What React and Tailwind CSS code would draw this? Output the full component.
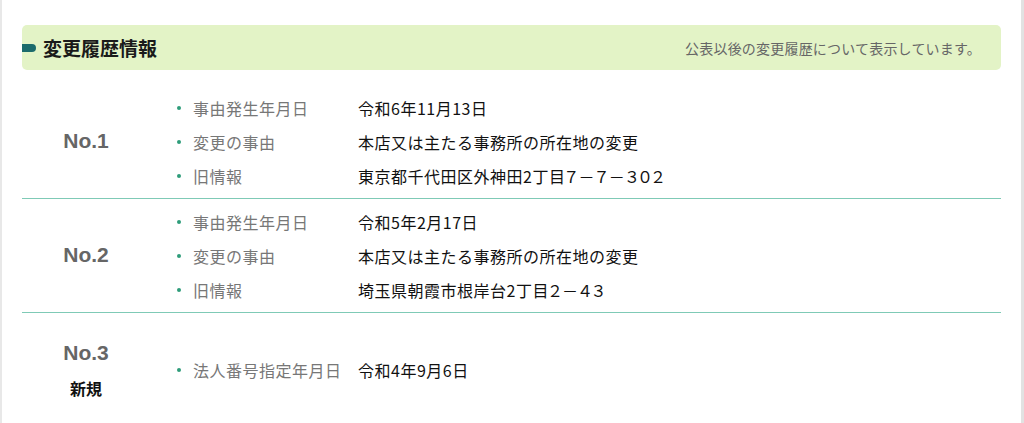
import React from "react";

const rows = [
  {
    no: "No.1",
    items: [
      ["事由発生年月日", "令和6年11月13日"],
      ["変更の事由", "本店又は主たる事務所の所在地の変更"],
      ["旧情報", "東京都千代田区外神田2丁目", "７－７－３０２"],
    ],
  },
  {
    no: "No.2",
    items: [
      ["事由発生年月日", "令和5年2月17日"],
      ["変更の事由", "本店又は主たる事務所の所在地の変更"],
      ["旧情報", "埼玉県朝霞市根岸台2丁目", "２－４３"],
    ],
  },
  {
    no: "No.3",
    sub: "新規",
    items: [["法人番号指定年月日", "令和4年9月6日"]],
  },
];

export default function App() {
  return (
    <div
      className="h-[423px] overflow-hidden bg-white border-l-2 border-r-[3px] border-l-[#e8e8e8] border-r-[#e2e2e2] pl-[20px] pr-[20px] pt-[25px]"
      style={{ fontFamily: '"Noto Sans CJK JP", "Noto Sans", sans-serif' }}
    >
      {/* 見出しバー */}
      <div className="h-[45px] rounded-[5px] bg-[#e3f3c6] flex items-center justify-between pr-[20px]">
        <div className="flex items-center">
          <span className="w-[14px] h-[8px] rounded-r-full bg-[#1c6b6c]" />
          <h2 className="ml-[7px] text-[19px] font-bold text-[#1a1a1a] leading-none">変更履歴情報</h2>
        </div>
        <p className="text-[14px] text-[#666] leading-none tracking-[0.2px]">公表以後の変更履歴について表示しています。</p>
      </div>

      <div className="mt-[15px]">
        {rows.map((r, i) => (
          <div
            key={r.no}
            className={`flex h-[114px] ${i < rows.length - 1 ? "border-b border-[#7fcab6]" : ""}`}
          >
            <div className="w-[128px] flex flex-col items-center justify-center gap-[17px] pb-[2px]">
              <span
                className="text-[21px] font-bold text-[#666] leading-none"
                style={{ fontFamily: '"Liberation Sans", Arial, sans-serif' }}
              >
                {r.no}
              </span>
              {r.sub && <span className="text-[16px] font-bold text-[#111] leading-none">{r.sub}</span>}
            </div>
            <div className="pl-[27px] flex flex-col justify-center">
              {r.items.map(([label, value, tail]) => (
                <div key={label} className="flex items-center h-[34px] text-[16px] leading-none tracking-[0.5px]">
                  <span className="w-[4px] h-[4px] rounded-full bg-[#2f9c7a] mr-[12px]" />
                  <span className="w-[165px] text-[#777]">{label}</span>
                  <span className="text-[#111]">
                    {value}
                    {tail && <span className="[font-feature-settings:'palt'] tracking-[1px]">{tail}</span>}
                  </span>
                </div>
              ))}
            </div>
          </div>
        ))}
      </div>
    </div>
  );
}
